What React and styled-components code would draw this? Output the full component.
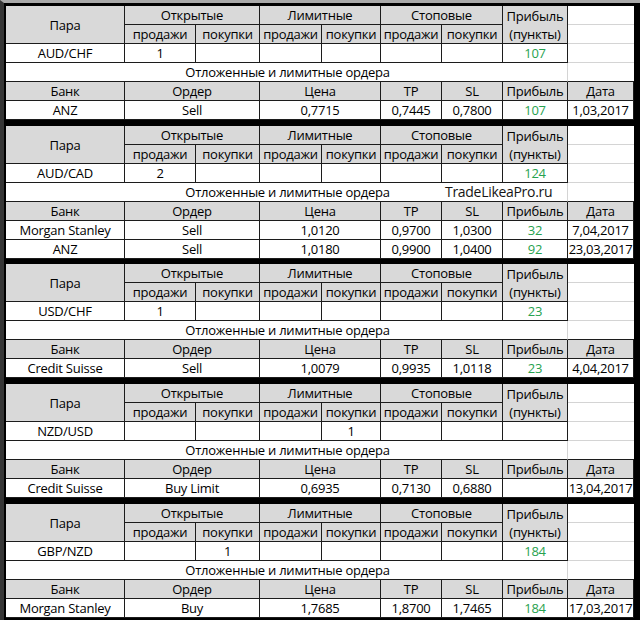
import React from "react";
import styled, { createGlobalStyle, css } from "styled-components";

const Global = createGlobalStyle`
  html, body { margin: 0; padding: 0; background: #000; }
  body { font-family: "Open Sans", "Noto Sans", sans-serif; }
`;

const Page = styled.div`
  width: 640px;
  height: 620px;
  box-sizing: border-box;
  background: #000;
  border-left: 4px solid #363636;
  border-top: 3px solid #a9a9a9;
  padding: 3px 6px 0 2px;
  display: flex;
  flex-direction: column;
  overflow: hidden;
`;

const Block = styled.div`
  display: grid;
  grid-template-columns: 119px 71px 64px 62px 59px 61px 61px 65px 66px;
  grid-auto-rows: 19px;
  margin-top: ${(p) => p.$gap || 0}px;
`;

const Cell = styled.div`
  box-sizing: border-box;
  border-right: 1px solid #1c1c1c;
  border-bottom: 1px solid #1c1c1c;
  background: ${(p) => (p.$head ? "#d9d9d9" : "#fff")};
  color: ${(p) => (p.$green ? "#27a24f" : "#000")};
  font-size: 13px;
  letter-spacing: -0.25px;
  line-height: 18px;
  text-align: center;
  white-space: nowrap;
  overflow: hidden;
  ${(p) => p.$cspan && css`grid-column: span ${p.$cspan};`}
  ${(p) => p.$rspan && css`
    grid-row: span ${p.$rspan};
    display: flex;
    flex-direction: column;
    justify-content: center;
  `}
`;

const Blank = styled.div`
  box-sizing: border-box;
  background: #fff;
  border-bottom: 1px solid ${(p) => (p.$dark ? "#1c1c1c" : "#d4d4d4")};
`;

const NoteCell = styled(Cell)`
  grid-column: span 8;
  position: relative;
  overflow: visible;
  border-right-color: #d4d4d4;
  padding-left: 2px;
`;

const Watermark = styled.span`
  position: absolute;
  left: 439px;
  top: 0;
  font-size: 14px;
  letter-spacing: -0.3px;
  line-height: 18px;
  color: #151515;
`;

function PairHeader() {
  return (
    <>
      <Cell $head $rspan={2}>Пара</Cell>
      <Cell $head $cspan={2}>Открытые</Cell>
      <Cell $head $cspan={2}>Лимитные</Cell>
      <Cell $head $cspan={2}>Стоповые</Cell>
      <Cell $head $rspan={2}>
        <span>Прибыль</span>
        <span>(пункты)</span>
      </Cell>
      <Blank />
      {["продажи", "покупки", "продажи", "покупки", "продажи", "покупки"].map((t, i) => (
        <Cell $head key={i}>{t}</Cell>
      ))}
      <Blank />
    </>
  );
}

function PairRow({ pair, counts, profit }) {
  return (
    <>
      <Cell>{pair}</Cell>
      {counts.map((c, i) => (
        <Cell key={i}>{c}</Cell>
      ))}
      <Cell $green>{profit}</Cell>
      <Blank />
    </>
  );
}

function BankHeader() {
  return (
    <>
      <Cell $head>Банк</Cell>
      <Cell $head $cspan={2}>Ордер</Cell>
      <Cell $head $cspan={2}>Цена</Cell>
      <Cell $head>TP</Cell>
      <Cell $head>SL</Cell>
      <Cell $head>Прибыль</Cell>
      <Cell $head>Дата</Cell>
    </>
  );
}

function OrderRow({ o }) {
  return (
    <>
      <Cell>{o.bank}</Cell>
      <Cell $cspan={2}>{o.order}</Cell>
      <Cell $cspan={2}>{o.price}</Cell>
      <Cell>{o.tp}</Cell>
      <Cell>{o.sl}</Cell>
      <Cell $green>{o.profit}</Cell>
      <Cell>{o.date}</Cell>
    </>
  );
}

const blocks = [
  {
    gap: 0,
    pair: "AUD/CHF",
    counts: ["1", "", "", "", "", ""],
    profit: "107",
    orders: [{ bank: "ANZ", order: "Sell", price: "0,7715", tp: "0,7445", sl: "0,7800", profit: "107", date: "1,03,2017" }],
  },
  {
    gap: 6,
    pair: "AUD/CAD",
    counts: ["2", "", "", "", "", ""],
    profit: "124",
    watermark: true,
    orders: [
      { bank: "Morgan Stanley", order: "Sell", price: "1,0120", tp: "0,9700", sl: "1,0300", profit: "32", date: "7,04,2017" },
      { bank: "ANZ", order: "Sell", price: "1,0180", tp: "0,9900", sl: "1,0400", profit: "92", date: "23,03,2017" },
    ],
  },
  {
    gap: 5,
    pair: "USD/CHF",
    counts: ["1", "", "", "", "", ""],
    profit: "23",
    orders: [{ bank: "Credit Suisse", order: "Sell", price: "1,0079", tp: "0,9935", sl: "1,0118", profit: "23", date: "4,04,2017" }],
  },
  {
    gap: 6,
    pair: "NZD/USD",
    counts: ["", "", "", "1", "", ""],
    profit: "",
    orders: [{ bank: "Credit Suisse", order: "Buy Limit", price: "0,6935", tp: "0,7130", sl: "0,6880", profit: "", date: "13,04,2017" }],
  },
  {
    gap: 6,
    pair: "GBP/NZD",
    counts: ["", "1", "", "", "", ""],
    profit: "184",
    orders: [{ bank: "Morgan Stanley", order: "Buy", price: "1,7685", tp: "1,8700", sl: "1,7465", profit: "184", date: "17,03,2017" }],
  },
];

export default function App() {
  return (
    <>
      <Global />
      <Page>
        {blocks.map((b, i) => (
          <Block key={i} $gap={b.gap}>
            <PairHeader />
            <PairRow pair={b.pair} counts={b.counts} profit={b.profit} />
            <NoteCell>
              Отложенные и лимитные ордера
              {b.watermark && <Watermark>TradeLikeaPro.ru</Watermark>}
            </NoteCell>
            <Blank $dark />
            <BankHeader />
            {b.orders.map((o, j) => (
              <OrderRow key={j} o={o} />
            ))}
          </Block>
        ))}
      </Page>
    </>
  );
}
